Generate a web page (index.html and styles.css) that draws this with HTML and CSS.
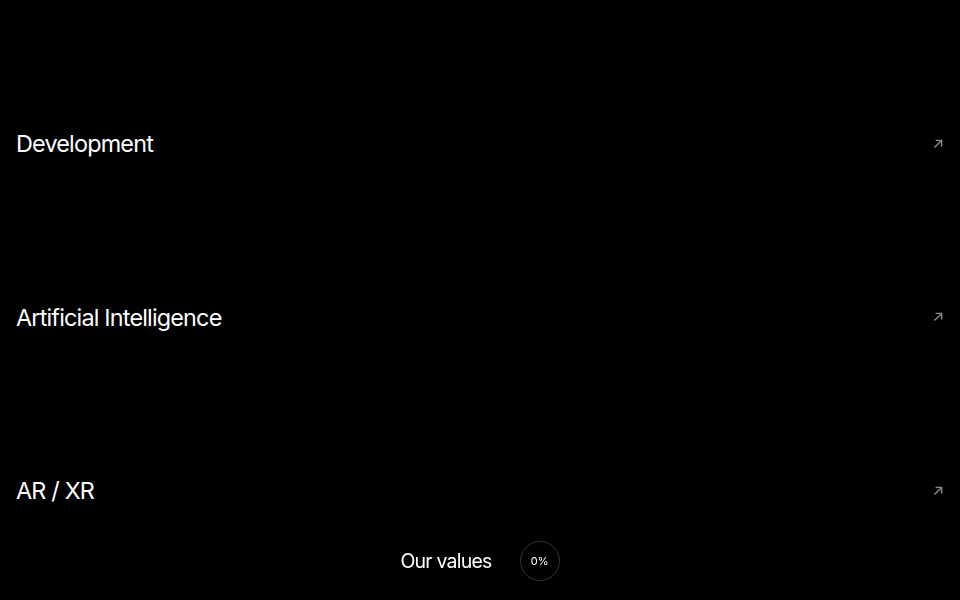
FILE: index.html
```html
<!DOCTYPE html>
<html lang="en">
<head>
<meta charset="utf-8">
<title>Services</title>
<link rel="stylesheet" href="styles.css">
</head>
<body>
<main class="list">
  <a class="row" href="#"><span class="title">Development</span><svg class="arrow" viewBox="0 0 10 10"><path d="M2 8 L8 2 M3 2 H8 V7"/></svg></a>
  <a class="row" href="#"><span class="title">Artificial Intelligence</span><svg class="arrow" viewBox="0 0 10 10"><path d="M2 8 L8 2 M3 2 H8 V7"/></svg></a>
  <a class="row" href="#"><span class="title">AR / XR</span><svg class="arrow" viewBox="0 0 10 10"><path d="M2 8 L8 2 M3 2 H8 V7"/></svg></a>
</main>
<div class="values">
  <span class="values-label">Our values</span>
  <span class="progress">0%</span>
</div>
</body>
</html>
```
FILE: styles.css
```css
html, body {
  margin: 0;
  padding: 0;
  background: #000;
  height: 100%;
  overflow: hidden;
}
body {
  font-family: Inter, "Liberation Sans", sans-serif;
  color: #fff;
}
.list {
  display: flex;
  flex-direction: column;
  padding-top: 57px;
}
.row {
  height: 173.6px;
  display: flex;
  align-items: center;
  justify-content: space-between;
  padding: 0 16px 0 16px;
  color: #fff;
  text-decoration: none;
}
.title {
  font-size: 23.4px;
  letter-spacing: -0.035em;
  font-weight: 400;
}
.arrow {
  width: 12px;
  height: 12px;
  fill: none;
  stroke: #8a8a8a;
  stroke-width: 1.2;
}
.values {
  position: fixed;
  left: 0;
  right: 0;
  bottom: 19px;
  display: flex;
  justify-content: center;
  align-items: center;
  gap: 28px;
}
.values-label {
  font-size: 19.5px;
  letter-spacing: -0.04em;
}
.progress {
  width: 40px;
  height: 40px;
  box-sizing: border-box;
  border: 1px solid #333;
  border-radius: 50%;
  display: flex;
  align-items: center;
  justify-content: center;
  font-size: 11px;
}
```
